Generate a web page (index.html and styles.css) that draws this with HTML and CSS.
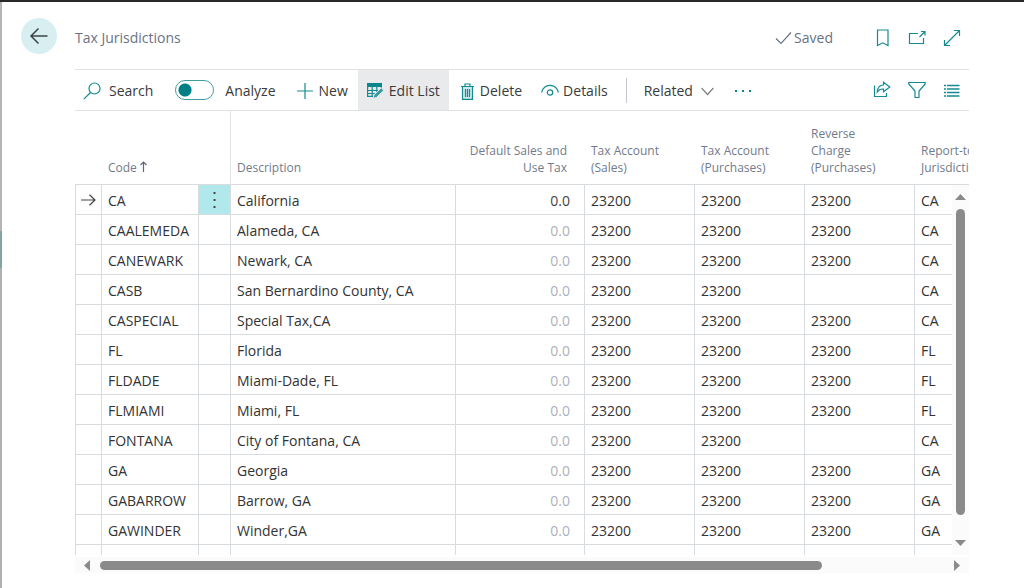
FILE: index.html
```html
<!DOCTYPE html>
<html lang="en">
<head>
<meta charset="utf-8">
<title>Tax Jurisdictions</title>
<link rel="stylesheet" href="styles.css">
</head>
<body>
<div class="shell">
  <div class="backdrop"></div>
  <main class="page">
    <header class="page-head">
      <button class="back" type="button" aria-label="Back">
        <svg width="20" height="18" viewBox="0 0 20 18"><path d="M18.500 9H2M9.500 1.500L2 9l7.500 7.500"/></svg>
      </button>
      <h1 class="title">Tax Jurisdictions</h1>
      <div class="saved">
        <svg width="17" height="14" viewBox="0 0 17 14"><path d="M1 7.500l5 5L16 1.500"/></svg>
        <span>Saved</span>
      </div>
      <div class="head-icons">
        <button class="icon-btn" type="button" aria-label="Bookmark">
          <svg width="18" height="18" viewBox="0 0 18 18"><path d="M4.500 1H15v15.500L9.750 13.800 4.500 16.500z"/></svg>
        </button>
        <button class="icon-btn" type="button" aria-label="Open in new window">
          <svg width="18" height="18" viewBox="0 0 18 18"><path d="M10 4.500H1.500v10H15.500V9M11.500 8L16.500 3M13 2.500H17V6.500"/></svg>
        </button>
        <button class="icon-btn" type="button" aria-label="Expand">
          <svg width="18" height="18" viewBox="0 0 18 18"><path d="M1.500 16.500l15-15M11 1.500h5.500V7M1.500 11v5.500H7"/></svg>
        </button>
      </div>
    </header>

    <div class="toolbar">
      <button class="tool tool-search" type="button">
        <svg width="18" height="18" viewBox="0 0 18 18"><circle cx="11.500" cy="6.500" r="5.500"/><path d="M7.500 10.500L.8 17.200"/></svg>
        <span>Search</span>
      </button>
      <label class="tool tool-analyze"><input class="switch" type="checkbox"><span>Analyze</span></label>
      <button class="tool tool-new" type="button">
        <svg width="16" height="16" viewBox="0 0 16 16"><path d="M8 0v16M0 8h16"/></svg>
        <span>New</span>
      </button>
      <button class="tool tool-edit" type="button">
        <svg width="17" height="16" viewBox="0 0 17 16"><path class="fill" d="M0 0h15v4H0z"/><path d="M.6 2v11.400H8M.6 7.500h11.500M.6 10.500h8M5.200 4v9.400M9.800 4v6M14.400 4v2"/><path class="pen" d="M6 15.500l1-3.700 7.200-7 2.600 2.600-7.200 7z"/></svg>
        <span>Edit List</span>
      </button>
      <button class="tool tool-delete" type="button">
        <svg width="13" height="17" viewBox="0 0 13 17"><path class="tint" d="M1.500 3.500h10v12.800h-10z"/><path d="M0 3.500h13M4 3.500V1h5v2.500M1.500 3.500v12.800h10V3.500M4.500 6v8M6.500 6v8M8.500 6v8"/></svg>
        <span>Delete</span>
      </button>
      <button class="tool tool-details" type="button">
        <svg width="18" height="14" viewBox="0 0 18 14"><path d="M.6 8.500C3-.9 15-.9 17.400 8.500"/><circle cx="9" cy="8.500" r="2.700"/></svg>
        <span>Details</span>
      </button>
      <span class="divider"></span>
      <button class="tool tool-related" type="button">
        <span>Related</span>
        <svg class="grey" width="13" height="9" viewBox="0 0 13 9"><path d="M.6 1l5.900 6.500L12.400 1"/></svg>
      </button>
      <button class="tool" type="button" aria-label="More options">
        <svg width="16" height="4" viewBox="0 0 16 4"><path class="fill" d="M0 1h2v2H0zM7 1h2v2H7zM14 1h2v2h-2z"/></svg>
      </button>
      <div class="tool-right">
        <button class="icon-btn" type="button" aria-label="Share">
          <svg width="18" height="18" viewBox="0 0 18 18"><path d="M1.500 4.500v11h12V12M10.500 1.200L16.800 6l-6.300 4.800V8C7.500 7.800 5.800 8.800 4.200 11 4.500 7 6.500 4.200 10.500 4z"/></svg>
        </button>
        <button class="icon-btn" type="button" aria-label="Filter">
          <svg width="18" height="18" viewBox="0 0 18 18"><path d="M.8 1.500h16.400v1.500L11 10v6.500H7V10L.8 3z"/></svg>
        </button>
        <button class="icon-btn" type="button" aria-label="List view">
          <svg class="bold" width="18" height="18" viewBox="0 0 18 18"><path d="M1 4.500h2M4 4.500h12.500M1 8h2M4 8h12.500M1 11.500h2M4 11.500h12.500M1 15h2M4 15h12.500"/></svg>
        </button>
      </div>
    </div>

    <div class="grid">
      <div class="viewport">
        <table class="list">
          <colgroup><col class="c-mark"><col class="c-code"><col class="c-menu"><col class="c-desc"><col class="c-rate"><col class="c-acct"><col class="c-acct"><col class="c-acct"><col class="c-acct"></colgroup>
          <thead>
            <tr>
              <th></th>
              <th>Code <svg class="sort" width="7" height="11" viewBox="0 0 7 11"><path d="M3.500 11V1M.5 4l3-3 3 3"/></svg></th>
              <th></th>
              <th>Description</th>
              <th class="num">Default Sales and Use Tax</th>
              <th>Tax Account (Sales)</th>
              <th>Tax Account (Purchases)</th>
              <th>Reverse Charge (Purchases)</th>
              <th>Report-to Jurisdiction</th>
            </tr>
          </thead>
          <tbody>
            <tr class="current"><td class="mark"><svg width="15" height="12" viewBox="0 0 15 12"><path d="M0 6h14M8.500 .8L14 6l-5.500 5.200"/></svg></td><td>CA</td><td class="menu"><button class="row-menu" type="button" aria-label="Row actions"><svg width="3" height="16" viewBox="0 0 3 16"><path d="M.5 0h2v2h-2zM.5 7h2v2h-2zM.5 14h2v2h-2z"/></svg></button></td><td>California</td><td class="num">0.0</td><td>23200</td><td>23200</td><td>23200</td><td>CA</td></tr>
            <tr><td></td><td>CAALEMEDA</td><td></td><td>Alameda, CA</td><td class="num">0.0</td><td>23200</td><td>23200</td><td>23200</td><td>CA</td></tr>
            <tr><td></td><td>CANEWARK</td><td></td><td>Newark, CA</td><td class="num">0.0</td><td>23200</td><td>23200</td><td>23200</td><td>CA</td></tr>
            <tr><td></td><td>CASB</td><td></td><td>San Bernardino County, CA</td><td class="num">0.0</td><td>23200</td><td>23200</td><td></td><td>CA</td></tr>
            <tr><td></td><td>CASPECIAL</td><td></td><td>Special Tax,CA</td><td class="num">0.0</td><td>23200</td><td>23200</td><td>23200</td><td>CA</td></tr>
            <tr><td></td><td>FL</td><td></td><td>Florida</td><td class="num">0.0</td><td>23200</td><td>23200</td><td>23200</td><td>FL</td></tr>
            <tr><td></td><td>FLDADE</td><td></td><td>Miami-Dade, FL</td><td class="num">0.0</td><td>23200</td><td>23200</td><td>23200</td><td>FL</td></tr>
            <tr><td></td><td>FLMIAMI</td><td></td><td>Miami, FL</td><td class="num">0.0</td><td>23200</td><td>23200</td><td>23200</td><td>FL</td></tr>
            <tr><td></td><td>FONTANA</td><td></td><td>City of Fontana, CA</td><td class="num">0.0</td><td>23200</td><td>23200</td><td></td><td>CA</td></tr>
            <tr><td></td><td>GA</td><td></td><td>Georgia</td><td class="num">0.0</td><td>23200</td><td>23200</td><td>23200</td><td>GA</td></tr>
            <tr><td></td><td>GABARROW</td><td></td><td>Barrow, GA</td><td class="num">0.0</td><td>23200</td><td>23200</td><td>23200</td><td>GA</td></tr>
            <tr><td></td><td>GAWINDER</td><td></td><td>Winder,GA</td><td class="num">0.0</td><td>23200</td><td>23200</td><td>23200</td><td>GA</td></tr>
            <tr class="partial"><td></td><td></td><td></td><td></td><td></td><td></td><td></td><td></td><td></td></tr>
          </tbody>
        </table>
        <div class="vbar">
          <svg width="11" height="6" viewBox="0 0 11 6"><path d="M0 6L5.500 0 11 6z"/></svg>
          <div class="thumb"></div>
          <svg width="11" height="6" viewBox="0 0 11 6"><path d="M0 0h11L5.500 6z"/></svg>
        </div>
      </div>
      <div class="hbar">
        <svg width="6" height="11" viewBox="0 0 6 11"><path d="M6 0v11L0 5.500z"/></svg>
        <div class="track"><div class="thumb"></div></div>
        <svg width="6" height="11" viewBox="0 0 6 11"><path d="M0 0v11l6-5.500z"/></svg>
      </div>
    </div>
  </main>
</div>
</body>
</html>
```

FILE: styles.css
```css
* { box-sizing: border-box; }

body {
  margin: 0;
  background: #fff;
  color: #333;
  font: 14px/20px "Open Sans", "Noto Sans", sans-serif;
}

.shell {
  display: flex;
  min-height: 100vh;
  border-top: 2px solid #292827;
}

/* Edge of the dimmed page behind the dialog */
.backdrop {
  flex: none;
  width: 2px;
  background: linear-gradient(#b5b3b3 229px, #7fa5a5 229px, #7fa5a5 266px, #b0b0b0 266px);
}

.page {
  flex: 1;
  min-width: 0;
  padding: 0 55px 14px 19px;
}

button {
  border: 0;
  padding: 0;
  background: none;
  color: inherit;
  font: inherit;
}

svg {
  display: block;
  flex: none;
  fill: none;
  stroke: #148a92;
  stroke-width: 1.2;
}

.page-head {
  display: flex;
  align-items: center;
  height: 67px;
  padding-top: 2px;
  color: #697384;
}

.back {
  display: grid;
  place-items: center;
  width: 36px;
  height: 36px;
  margin-bottom: 2px;
  border-radius: 50%;
  background: #d8eff1;
}

.back svg { stroke: #3c4446; stroke-width: 1.5; }

.title {
  margin: 2px auto 0 18px;
  font-size: 14px;
  font-weight: 400;
}

.saved {
  display: flex;
  align-items: center;
  gap: 2px;
  margin: 2px 40px 0 0;
}

.saved svg { stroke: #697384; }

.head-icons,
.tool-right {
  display: flex;
  gap: 17px;
  padding-right: 8px;
}

.head-icons { padding-top: 2px; }

.toolbar {
  display: flex;
  align-items: stretch;
  height: 42px;
  margin-left: 54px;
  border: solid #dfe1e3;
  border-width: 1px 0;
  color: #3a3a3a;
}

.tool {
  display: flex;
  align-items: center;
  gap: 8px;
  padding-top: 2px;
  white-space: nowrap;
}

.tool-search { margin-left: 8px; }
.tool-analyze { gap: 11px; margin-left: 22px; }
.tool-new { gap: 6px; margin: 0 10px 0 21px; }
.tool-edit { gap: 5px; padding: 2px 9px 0; background: #e9eaec; }
.tool-delete { gap: 6px; margin-left: 12px; }
.tool-details { gap: 4px; margin-left: 19px; }
.tool-related { margin-right: 21px; }

.divider {
  width: 1px;
  margin: 8px 17px 7px 18px;
  background: #c3c8ce;
}

.tool-right {
  align-items: center;
  margin-left: auto;
}

.fill { fill: #0b858c; stroke: none; }
.tint { fill: #cfe8ea; stroke: none; }
.pen { fill: #3b9ca2; stroke: #e9eaec; stroke-width: 1; }
.bold { stroke-width: 1.6; }
.grey { stroke: #808080; }

.switch {
  appearance: none;
  width: 39px;
  height: 20px;
  margin: 0 0 2px;
  border: 1px solid #3f9ea5;
  border-radius: 10px;
  background: radial-gradient(circle at 9px 9px, #007f87 6px, transparent 7px);
}

.grid { margin-left: 54px; }

.viewport {
  position: relative;
  overflow: hidden;
}

.list {
  width: calc(100% + 56px);
  table-layout: fixed;
  border-collapse: separate;
  border-spacing: 0;
}

.c-mark { width: 27px; }
.c-code { width: 97px; }
.c-menu { width: 32px; }
.c-rate { width: 129px; }
.c-acct { width: 110px; }

.list th {
  height: 74px;
  padding: 0 24px 8px 6px;
  border-bottom: 1px solid #d9dcde;
  color: #717b8b;
  font-size: 12px;
  font-weight: 400;
  line-height: 17px;
  text-align: left;
  vertical-align: bottom;
}

.list th:nth-child(2) { padding-right: 0; }
.list th:nth-child(3) { border-right: 1px solid #e3e5e7; }
.list th.num { padding: 0 18px 8px 6px; }

.sort { display: inline-block; stroke: #5f6876; }

.list td {
  height: 30px;
  padding: 2px 6px 0;
  border: solid #d9dcde;
  border-width: 0 1px 1px 0;
  white-space: nowrap;
}

.list td:first-child { border-left: 1px solid #d9dcde; }
.list .partial td { height: 10px; padding: 0; border-bottom: 0; }
.list .num { text-align: right; }
.list td.num { padding-right: 14px; color: #adb2ba; }
.list .current .num { color: #444; }
.list .mark { padding: 0 5px; }
.mark svg { stroke: #444; }
.list .menu { padding: 0; }

.row-menu {
  display: grid;
  place-items: center;
  width: 100%;
  height: 29px;
  background: #b1e8eb;
}

.row-menu svg { fill: #444; stroke: none; }

.vbar {
  position: absolute;
  top: 74px;
  right: 0;
  bottom: 0;
  display: flex;
  flex-direction: column;
  align-items: center;
  gap: 9px;
  width: 17px;
  padding: 9px 0;
  background: #fbfbfb;
}

.vbar svg,
.hbar svg { fill: #8a8a8a; stroke: none; }

.thumb { border-radius: 5px; background: #8a8a8a; }
.vbar .thumb { width: 9px; height: 306px; margin-bottom: auto; }

.hbar {
  display: flex;
  align-items: center;
  gap: 10px;
  height: 16px;
  margin-top: 2px;
  padding: 0 9px;
  background: #fbfbfb;
}

.track { flex: 1; }
.hbar .thumb { width: 85.5%; height: 9px; }
```
